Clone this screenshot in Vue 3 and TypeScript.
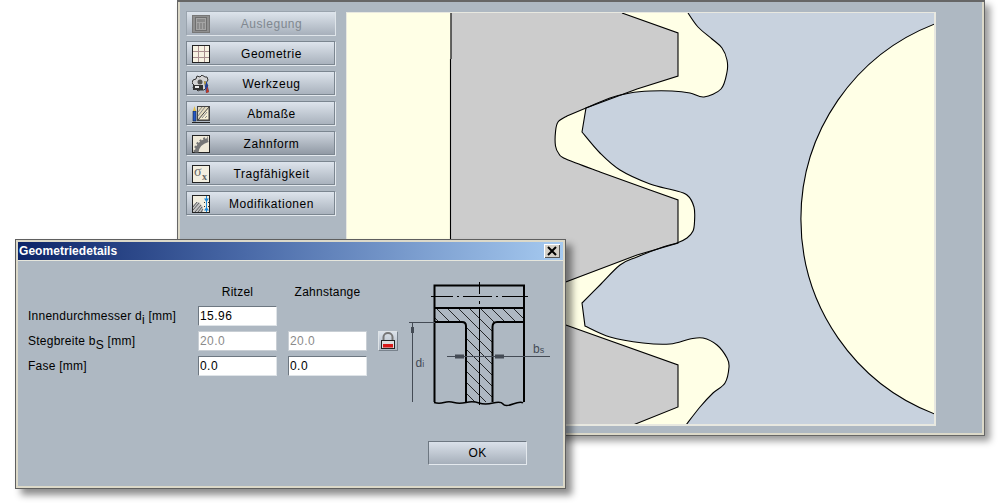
<template>
  <div class="desktop">
    <!-- Hauptfenster -->
    <div class="main-window">
      <div class="side-menu">
        <button
          v-for="item in menu"
          :key="item.label"
          class="menu-btn"
          :class="{ disabled: item.disabled, active: item.active }"
        >
          <svg class="menu-icon" viewBox="0 0 18 18" width="18" height="18">
            <g v-if="item.icon === 'calc'">
              <rect x="0.5" y="0.5" width="17" height="17" fill="#8f8f8f" stroke="#777" />
              <rect x="3.5" y="2.5" width="11" height="13" fill="#a5a5a5" stroke="#6f6f6f" />
              <rect x="5" y="4" width="8" height="3" fill="#8a8a8a" />
              <path d="M5 9h2M8 9h2M11 9h2M5 11h2M8 11h2M11 11h2M5 13h2M8 13h2M11 13h2" stroke="#707070" />
            </g>
            <g v-else-if="item.icon === 'grid'">
              <rect x="0.5" y="0.5" width="17" height="17" fill="#f7f2e2" stroke="#222" />
              <path d="M6.5 1v16M12.5 1v16M1 6.5h16M1 12.5h16" stroke="#a98f8f" />
            </g>
            <g v-else-if="item.icon === 'tool'">
              <path d="M1 5l3-1 1-3 3 1 2-2 3 2 2 0 1 3-2 3 2 3-4 4H8l-2 1-2-2-3-1 1-3-2-2z" fill="#d4d4d4" stroke="#333" />
              <circle cx="8" cy="7" r="2.5" fill="#555" />
              <rect x="1" y="10" width="10" height="5" fill="#333" />
              <rect x="3" y="11" width="4" height="2" fill="#eee" />
              <path d="M12 6l3 1 2 10-3 1z" fill="#1c3f9c" />
              <path d="M15 11l2 6-3 1z" fill="#c73a1c" />
              <path d="M12 6l2 1-1 4z" fill="#e0b020" />
            </g>
            <g v-else-if="item.icon === 'measure'">
              <rect x="5.5" y="1.5" width="12" height="14" fill="#e4dcc0" stroke="#444" />
              <path d="M6 15L17 2V15z" fill="#f5eed4" stroke="#444" />
              <path d="M6 11L13 2M6 7L10 2M10 13l5-6M13 13l2-2" stroke="#8a8a8a" />
              <path d="M1 6h3v10H1z" fill="#2458c8" stroke="#123" stroke-width="0.6" />
              <path d="M1 6l1.5-5L4 6z" fill="#e6c040" />
              <path d="M0 17.5h18" stroke="#222" />
            </g>
            <g v-else-if="item.icon === 'tooth'">
              <rect x="0.5" y="0.5" width="17" height="17" fill="#efe9d8" stroke="#222" />
              <path d="M4.5 17.5Q5 8 16 5" fill="none" stroke="#777" stroke-width="4" />
              <path d="M3 17Q3.5 6 16 3" fill="none" stroke="#777" stroke-width="3" stroke-dasharray="2 2" />
            </g>
            <g v-else-if="item.icon === 'sigma'">
              <rect x="0.5" y="0.5" width="17" height="17" fill="#f3efe0" stroke="#222" />
              <text x="2" y="11" class="sigma">σ</text>
              <text x="10" y="15" class="sigma-x">x</text>
            </g>
            <g v-else>
              <rect x="0.5" y="0.5" width="17" height="17" fill="#f3efe0" stroke="#222" />
              <path d="M1 17V10l4-3h2l4 5v5z" fill="#c4c4c4" />
              <path d="M1 12l4-5M1 15l6-7M3 17l6-7M6 17l4-5M9 17l2-3" stroke="#444" stroke-width="0.8" />
              <path d="M12 7.5h5M12 11.5h5" stroke="#333" stroke-dasharray="1 1" />
              <path d="M14.5 1v16" stroke="#1a86d8" />
              <path d="M14.5 7L12 3.5h5zM14.5 12L12 15.5h5z" fill="#1a86d8" />
            </g>
          </svg>
          <span class="menu-label">{{ item.label }}</span>
        </button>
      </div>

      <!-- Verzahnung -->
      <div class="canvas-frame">
        <svg class="gear-canvas" viewBox="347 13 587 411" width="587" height="411">
          <path :d="rackShape" fill="#cccccc" stroke="none" />
          <path :d="pinionShape" fill="#c8d2de" stroke="none" />
          <path :d="boreShape" fill="#ffffe6" stroke="#000" stroke-width="1.1" />
          <path :d="rackLine" fill="none" stroke="#000" stroke-width="1.1" />
          <path :d="pinionLine" fill="none" stroke="#000" stroke-width="1.1" />
        </svg>
      </div>
    </div>

    <!-- Dialog -->
    <div class="dialog">
      <div class="title-bar">
        <span class="title-text">Geometriedetails</span>
        <button class="close-btn">
          <svg viewBox="0 0 16 14" width="16" height="14">
            <path d="M4 3l8 8M12 3l-8 8" stroke="#000" stroke-width="2" />
          </svg>
        </button>
      </div>
      <div class="dialog-body">
        <div class="dialog-main">
          <div class="form-grid">
            <span></span>
            <span class="col-head">Ritzel</span>
            <span class="col-head">Zahnstange</span>
            <span></span>

            <span class="field-label">Innendurchmesser d<sub>i</sub> [mm]</span>
            <input class="field" value="15.96" />
            <span></span>
            <span></span>

            <span class="field-label">Stegbreite b<sub>S</sub> [mm]</span>
            <input class="field off" value="20.0" disabled />
            <input class="field off" value="20.0" disabled />
            <button class="lock-btn">
              <svg viewBox="0 0 18 18" width="18" height="18">
                <path d="M4.5 9V5a4.5 4 0 0 1 9 0v4" fill="none" stroke="#777" stroke-width="2" />
                <rect x="2.5" y="8.5" width="13" height="8" fill="#ddd" stroke="#222" />
                <rect x="4" y="12" width="10" height="3.5" fill="#d81818" />
              </svg>
            </button>

            <span class="field-label">Fase [mm]</span>
            <input class="field" value="0.0" />
            <input class="field" value="0.0" />
            <span></span>
          </div>

          <svg class="section-view" viewBox="408 278 144 130" width="144" height="130">
            <defs>
              <clipPath id="t-profile">
                <path d="M435 308H523V320H497q-4 0-4 5V401H466V325q0-4-4-4H435Z" />
              </clipPath>
            </defs>
            <g stroke="#000" stroke-width="0.8" clip-path="url(#t-profile)">
              <path v-for="h in hatch" :key="h" :d="h" />
            </g>
            <path d="M434.5 401V284.5H524V401" fill="none" stroke="#000" stroke-width="2" />
            <path d="M434 307h90" stroke="#000" stroke-width="2" />
            <path d="M431 295.5h22m4 0h2m4 0h29m4 0h2m4 0h26" stroke="#000" stroke-width="1" fill="none" />
            <path d="M479.5 281v12m0 7v3m0 4v97" stroke="#000" stroke-width="1" fill="none" />
            <path d="M434 321h28q4 0 4 4v76" fill="none" stroke="#000" stroke-width="2" />
            <path d="M524 321h-27q-4.5 0-4.5 5v75" fill="none" stroke="#000" stroke-width="2" />
            <path d="M434 401.5q5 1.5 10 0t10 0 12 0 13 .5 14 0 10 1 10 0 10-1" fill="none" stroke="#000" stroke-width="1.5" />
            <!-- Maße -->
            <path d="M409 321.5h26M412.5 322v79" stroke="#444b55" stroke-width="1" fill="none" />
            <path d="M411 326h3v6h-3z" fill="#444b55" />
            <path d="M447 355.5h103" stroke="#444b55" stroke-width="1" fill="none" />
            <path d="M455 353.5h9v4h-9zM495 353.5h9v4h-9z" fill="#444b55" />
            <text x="415.5" y="366" class="dim">d<tspan class="dim-sub">i</tspan></text>
            <text x="533" y="352" class="dim">b<tspan class="dim-sub">s</tspan></text>
          </svg>
        </div>
        <div class="dialog-footer">
          <button class="ok-btn">OK</button>
        </div>
      </div>
    </div>
  </div>
</template>

<script setup lang="ts">
interface MenuItem {
  label: string
  icon: string
  disabled?: boolean
  active?: boolean
}

const menu: MenuItem[] = [
  { label: 'Auslegung', icon: 'calc', disabled: true },
  { label: 'Geometrie', icon: 'grid' },
  { label: 'Werkzeug', icon: 'tool' },
  { label: 'Abmaße', icon: 'measure' },
  { label: 'Zahnform', icon: 'tooth', active: true },
  { label: 'Tragfähigkeit', icon: 'sigma' },
  { label: 'Modifikationen', icon: 'mod' },
]

type Pt = [number, number]

// Kontur als Catmull-Rom Kurve, damit die Flanken rund bleiben
const smooth = (pts: Pt[]) => {
  let d = ''
  for (let i = 0; i < pts.length - 1; i++) {
    const p0 = pts[Math.max(i - 1, 0)]
    const p1 = pts[i]
    const p2 = pts[i + 1]
    const p3 = pts[Math.min(i + 2, pts.length - 1)]
    const c1x = p1[0] + (p2[0] - p0[0]) / 6
    const c1y = p1[1] + (p2[1] - p0[1]) / 6
    const c2x = p2[0] - (p3[0] - p1[0]) / 6
    const c2y = p2[1] - (p3[1] - p1[1]) / 6
    d += `C${c1x} ${c1y} ${c2x} ${c2y} ${p2[0]} ${p2[1]}`
  }
  return d
}

const rackRoot = smooth([[567, 116], [558, 122], [555.5, 132], [555.5, 146], [559, 154], [566, 159], [600, 172]])

const rackLine =
  'M622 13L678 33V76L637 89L586 108L567 116' + rackRoot +
  'L650 190L678 200V243L637 255L563 283' +
  'M563 324L678 365V407L633 425' +
  'M451 13V59M450.5 59V425'

const rackShape =
  'M450.5 13H622L678 33V76L637 89L586 108L567 116' + rackRoot +
  'L650 190L678 200V243L637 255L520 300L563 324L678 365V407L633 425H450.5Z'

const topFlank = smooth([
  [688, 13], [698, 27], [712, 39], [722, 48], [727, 60], [727, 72], [721, 89], [704, 97], [690, 93], [672, 91], [650, 91], [630, 93], [610, 98], [586, 108],
])
const midFlank = smooth([
  [582, 132], [600, 153], [620, 170], [650, 184], [673, 190], [687, 195], [694, 207], [694.5, 222], [693, 231], [687, 238], [677, 243], [663, 247], [637, 257], [620, 265], [600, 285], [582, 303],
])
const lowFlank = smooth([
  [585, 326], [610, 337], [643, 343], [670, 344], [690, 339], [703, 338], [717, 345], [727, 358], [729, 367], [725, 383], [713, 393], [700, 407], [686, 425],
])

const pinionLine = 'M688 13' + topFlank + 'L582 132' + midFlank + 'L585 326' + lowFlank
const pinionShape = pinionLine + 'H940V13Z'

const boreShape = 'M936 23.5A209 209 0 0 0 936 414.5Z'

// Schraffur des T-Profils, wird per clipPath zugeschnitten
const hatch: string[] = []
for (let x = 330; x < 530; x += 11) {
  hatch.push(`M${x} 300L${x + 110} 410`)
}
</script>

<style>
html,
body {
  margin: 0;
  background: #fff;
}
</style>

<style scoped>
.desktop {
  position: relative;
  width: 1000px;
  height: 504px;
  overflow: hidden;
  background: #fff;
  font-family: "Liberation Sans", Arial, sans-serif;
  font-size: 12px;
  color: #000;
}

.main-window {
  position: absolute;
  left: 177px;
  top: 0;
  width: 808px;
  height: 436px;
  box-sizing: border-box;
  display: flex;
  align-items: flex-start;
  gap: 10px;
  padding: 9px 48px 0 8px;
  background: #aeb8c2;
  border: 1px solid #666;
  border-top-width: 2px;
  box-shadow: inset 2px 0 0 #dcd9c9, inset -2px 0 0 #dcd9c9, inset 0 -2px 0 #dcd9c9, 5px 5px 7px rgba(0, 0, 0, 0.4);
}

.side-menu {
  display: flex;
  flex-direction: column;
  gap: 5px;
  width: 150px;
  flex: none;
}

.menu-btn {
  display: flex;
  align-items: center;
  height: 25px;
  padding: 0 0 0 5px;
  box-sizing: border-box;
  border: 1px solid #7b8690;
  border-right-color: #e4e9ee;
  border-bottom-color: #e4e9ee;
  background: linear-gradient(#dde4ec, #a7b0bb);
  font: inherit;
  color: #000;
  box-shadow: inset -1px -1px 0 #7b8690;
}

.menu-btn.active {
  background: linear-gradient(#cfd6df, #8e97a2);
}

.menu-btn.disabled {
  color: #808890;
  border-color: #9aa4ae;
  border-right-color: #dfe5ea;
  border-bottom-color: #dfe5ea;
  box-shadow: none;
}

.menu-icon {
  flex: none;
}

.menu-label {
  flex: 1;
  text-align: center;
  letter-spacing: 0.55px;
  padding-right: 2px;
}

.sigma {
  font-family: "Liberation Serif", serif;
  font-size: 14px;
  fill: #666;
}

.sigma-x {
  font-family: "Liberation Serif", serif;
  font-size: 10px;
  font-weight: bold;
  fill: #666;
}

.canvas-frame {
  margin-top: 1px;
  flex: none;
  background: #ffffe6;
  border: 1px solid #e8e8e0;
  border-right-width: 2px;
  border-bottom-width: 2px;
  overflow: hidden;
  line-height: 0;
}

.gear-canvas {
  display: block;
}

.dialog {
  position: absolute;
  left: 15px;
  top: 239px;
  width: 551px;
  height: 250px;
  box-sizing: border-box;
  display: flex;
  flex-direction: column;
  padding: 2px;
  background: #aeb8c2;
  border: 1px solid #5f5f5f;
  box-shadow: inset 0 0 0 2px #dcd9c9, 6px 6px 7px rgba(0, 0, 0, 0.45);
}

.title-bar {
  display: flex;
  align-items: center;
  justify-content: space-between;
  height: 18px;
  flex: none;
  padding: 0 3px 0 1px;
  background: linear-gradient(90deg, #0c2468, #4a6aa8 42%, #a6caf0);
  border-bottom: 1px solid #e6e6dc;
}

.title-text {
  color: #fff;
  font-weight: bold;
  font-size: 12px;
  letter-spacing: 0.05px;
}

.close-btn {
  display: flex;
  align-items: center;
  justify-content: center;
  width: 16px;
  height: 14px;
  padding: 0;
  border: none;
  background: #d4d0c8;
  box-shadow: inset 1px 1px 0 #fff, inset -1px -1px 0 #555;
}

.dialog-body {
  flex: 1;
  display: flex;
  flex-direction: column;
  padding: 0 0 21px 10px;
}

.dialog-main {
  display: flex;
  align-items: flex-start;
}

.form-grid {
  display: grid;
  grid-template-columns: 159px 79px 79px 20px;
  grid-template-rows: 19px 20px 20px 20px;
  column-gap: 11px;
  row-gap: 5px;
  width: 370px;
  padding-top: 21px;
  align-items: center;
}

.col-head {
  text-align: center;
  letter-spacing: 0.25px;
  white-space: nowrap;
}

.field-label {
  letter-spacing: 0.25px;
  white-space: nowrap;
}

.field-label sub {
  font-size: 12px;
  line-height: 0;
  vertical-align: -4px;
}

.field {
  width: 79px;
  height: 20px;
  box-sizing: border-box;
  padding: 0 1px;
  border: 1px solid #6d7781;
  border-right-color: #dfe4e8;
  border-bottom-color: #dfe4e8;
  background: #fff;
  font: inherit;
  font-size: 12px;
  letter-spacing: 0.45px;
  color: #000;
}

.field.off {
  border-color: #c8ced4;
  color: #8a8a8a;
}

.lock-btn {
  display: flex;
  align-items: center;
  justify-content: center;
  width: 20px;
  height: 20px;
  padding: 0;
  border: 1px solid #dfe4e8;
  border-right-color: #78828c;
  border-bottom-color: #78828c;
  background: linear-gradient(#dbe2ea, #aeb7c2);
}

.section-view {
  flex: none;
  margin: 18px 0 0 10px;
}

.dim {
  font-size: 12px;
  fill: #444b55;
}

.dim-sub {
  font-size: 9px;
}

.dialog-footer {
  margin-top: auto;
  display: flex;
  justify-content: flex-end;
  padding-right: 36px;
}

.ok-btn {
  width: 99px;
  height: 24px;
  padding: 0;
  box-sizing: border-box;
  border: 1px solid #6d7781;
  border-right-color: #e4e9ee;
  border-bottom-color: #e4e9ee;
  background: linear-gradient(#dae1ea, #a6afba);
  font: inherit;
  color: #000;
  letter-spacing: 0.4px;
}
</style>
